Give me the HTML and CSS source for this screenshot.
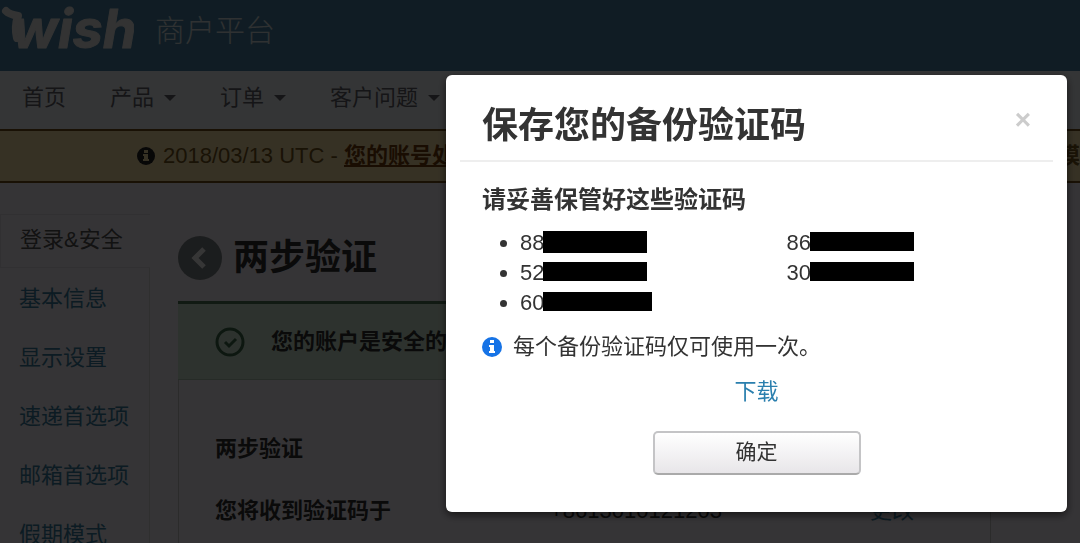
FILE: index.html
```html
<!DOCTYPE html>
<html lang="zh-CN">
<head>
    <meta charset="UTF-8">
    <meta name="viewport" content="width=device-width, initial-scale=1.0">
    <title>Wish 商户平台</title>
    <link rel="stylesheet" href="styles.css">
</head>
<body>

    <header class="topbar">
        <a class="logo" href="#">
            <svg width="134" height="54" viewBox="0 0 134 54" aria-hidden="true">
                <path class="swash" d="M6 11 C9 14 13 15 18 16 C16 22 15 30 17 38"/>
                <text x="12" y="48">wish</text>
            </svg>
        </a>
        <span class="platform">商户平台</span>
    </header>

    <nav class="menu">
        <a href="#">首页</a>
        <a class="dropdown" href="#">产品</a>
        <a class="dropdown" href="#">订单</a>
        <a class="dropdown" href="#">客户问题</a>
    </nav>

    <div class="notice">
        <svg class="notice-icon" width="18" height="18" viewBox="0 0 18 18" aria-hidden="true">
            <circle cx="9" cy="9" r="9"/>
            <path d="M7 3h4v3H7zM6 7h5v5h1v2H6v-2h1V9H6z"/>
        </svg>
        <span>2018/03/13 UTC - <a href="#">您的账号处于</a></span>
        <span class="notice-end">模</span>
    </div>

    <div class="page">
        <aside class="sidebar">
            <a class="active" href="#">登录&amp;安全</a>
            <a href="#">基本信息</a>
            <a href="#">显示设置</a>
            <a href="#">速递首选项</a>
            <a href="#">邮箱首选项</a>
            <a href="#">假期模式</a>
        </aside>

        <main class="content">
            <div class="heading">
                <a class="back" href="#" aria-label="返回">
                    <svg width="44" height="44" viewBox="0 0 44 44" aria-hidden="true">
                        <circle cx="22" cy="22" r="22"/>
                        <path d="M26 13L17 22l9 9"/>
                    </svg>
                </a>
                <h1>两步验证</h1>
            </div>
            <div class="safe">
                <svg width="30" height="30" viewBox="0 0 30 30" aria-hidden="true">
                    <circle cx="15" cy="15" r="13"/>
                    <path d="M10 15l4 4 7-7"/>
                </svg>
                <strong>您的账户是安全的</strong>
            </div>
            <div class="panel">
                <div class="row"><strong>两步验证</strong></div>
                <div class="row">
                    <strong>您将收到验证码于</strong>
                    <span>+8613010121203</span>
                    <a href="#">更改</a>
                </div>
            </div>
        </main>
    </div>

    <div class="backdrop">
        <div class="modal" role="dialog" aria-modal="true" aria-labelledby="modalTitle">
            <div class="modal-header">
                <h2 id="modalTitle">保存您的备份验证码</h2>
                <button class="close" type="button" aria-label="关闭">×</button>
            </div>
            <div class="modal-body">
                <h3>请妥善保管好这些验证码</h3>
                <div class="codes">
                    <ul>
                        <li>88<span class="mask tall"></span></li>
                        <li>52<span class="mask"></span></li>
                        <li>60<span class="mask wide"></span></li>
                    </ul>
                    <ul class="plain">
                        <li>86<span class="mask"></span></li>
                        <li>30<span class="mask"></span></li>
                    </ul>
                </div>
                <p class="hint">
                    <svg width="20" height="20" viewBox="0 0 20 20" aria-hidden="true">
                        <circle cx="10" cy="10" r="10"/>
                        <path d="M8 3h4v3H8zM7 8h5v6h1v2H7v-2h1v-4H7z"/>
                    </svg>
                    每个备份验证码仅可使用一次。
                </p>
                <a class="download" href="#">下载</a>
                <button class="ok" type="button">确定</button>
            </div>
        </div>
    </div>

</body>
</html>
```

FILE: styles.css
```css
* {
    box-sizing: border-box;
}
body {
    margin: 0;
    height: 100vh;
    overflow: hidden;
    font-family: "Liberation Sans", "Noto Sans CJK SC", sans-serif;
    font-size: 22px;
    line-height: 30px;
    color: #333;
    background-color: #faf4fc;
}
a {
    color: #3a82a3;
    text-decoration: none;
}
h1, h2, h3, p, ul {
    margin: 0;
}

/* top bar */
.topbar {
    display: flex;
    align-items: flex-start;
    gap: 21px;
    height: 71px;
    background: #4c85a8;
}
.logo svg {
    display: block;
}
.logo text {
    font: italic 700 54px Inter, sans-serif;
    fill: #eee;
    stroke: #eee;
    stroke-width: 1;
    stroke-linejoin: round;
}
.swash {
    fill: none;
    stroke: #eee;
    stroke-width: 8;
    stroke-linecap: round;
    stroke-linejoin: round;
}
.platform {
    padding-top: 13px;
    font-family: "Noto Sans CJK SC", sans-serif;
    font-size: 30px;
    font-weight: 300;
    color: #dde6ea;
}

/* menu */
.menu {
    display: flex;
    gap: 44px;
    height: 58px;
    padding: 12px 22px;
    background: #f6faff;
}
.menu a {
    display: flex;
    align-items: center;
    gap: 10px;
    height: 30px;
    color: #66666c;
}
.dropdown::after {
    content: "";
    border: 6px solid transparent;
    border-top-color: #66666c;
    border-bottom: 0;
}

.notice {
    display: flex;
    align-items: center;
    gap: 8px;
    height: 54px;
    padding-left: 137px;
    white-space: nowrap;
    color: #79591c;
    background: #ffe6ac;
    border-top: 2px solid #755018;
    border-bottom: 2px solid #755018;
}
.notice a {
    font-weight: bold;
    color: #79410a;
    text-decoration: underline;
}
.notice-end {
    margin-left: auto;
    font-weight: bold;
}
.notice-icon {
    fill: #222;
}
.notice-icon path {
    fill: #ffe6ac;
}

/* page */
.page {
    display: flex;
    gap: 28px;
    padding-top: 31px;
}
.sidebar {
    width: 150px;
}
.sidebar a {
    display: block;
    height: 59px;
    padding: 16px 19px;
    border-right: 1px solid #ddd;
}
.sidebar .active {
    height: 54px;
    padding-top: 10px;
    color: #555;
    border: 1px solid #e8e0ec;
    border-right: 0;
}
.content {
    width: 813px;
}
.heading {
    display: flex;
    align-items: center;
    gap: 11px;
    padding-top: 22px;
    height: 66px;
}
.heading h1 {
    font-size: 36px;
}
.back svg {
    display: block;
    fill: #82898c;
}
.back path {
    fill: none;
    stroke: #fff;
    stroke-width: 5;
}
.safe {
    display: flex;
    align-items: center;
    gap: 26px;
    height: 79px;
    margin-top: 21px;
    padding-left: 37px;
    color: #333;
    background: #d6ecda;
    border-top: 3px solid #527a5a;
    border-bottom: 1px solid #b5cbb9;
}
.safe svg {
    fill: none;
    stroke: #3d6d4c;
    stroke-width: 3;
}
.panel {
    padding: 38px 36px;
    height: 300px;
    border: 1px solid #ccc;
    border-top: 0;
}
.row {
    display: grid;
    grid-template-columns: 335px 320px auto;
    height: 62px;
    padding-top: 16px;
}

/* dialog */
.backdrop {
    position: fixed;
    inset: 0;
    display: flex;
    align-items: flex-start;
    justify-content: flex-end;
    padding: 75px 13px;
    background: rgba(0, 0, 0, 0.79);
}
.modal {
    width: 100%;
    max-width: 621px;
    background: #fff;
    border-radius: 6px;
    box-shadow: 0 3px 9px rgba(0, 0, 0, 0.6);
}
.modal-header {
    display: flex;
    align-items: flex-end;
    justify-content: space-between;
    height: 87px;
    margin: 0 14px;
    padding: 0 22px 19px;
    border-bottom: 2px solid #eee;
}
.modal-header h2 {
    font-size: 36px;
}
.close {
    padding: 0 0 5px;
    border: 0;
    background: none;
    font: bold 28px "Liberation Sans", sans-serif;
    color: #ccc;
    cursor: pointer;
}
.modal-body {
    display: flex;
    flex-direction: column;
    padding: 23px 36px 37px;
}
.modal-body h3 {
    font-size: 24px;
}
.codes {
    display: grid;
    grid-template-columns: 1fr 1fr;
    gap: 30px;
    margin-top: 13px;
}
.codes ul {
    padding-left: 38px;
}
.codes .plain {
    padding-left: 15px;
    list-style: none;
}
.codes li {
    height: 30px;
}
.mask {
    display: inline-block;
    width: 104px;
    height: 19px;
    margin: -5px 0 0 -1px;
    vertical-align: middle;
    background: #000;
}
.tall {
    height: 22px;
}
.wide {
    width: 109px;
}
.hint {
    display: flex;
    align-items: center;
    gap: 11px;
    margin-top: 14px;
}
.hint svg {
    fill: #1673e6;
}
.hint path {
    fill: #fff;
}
.download {
    align-self: center;
    margin-top: 15px;
    color: #2a7fae;
}
.ok {
    align-self: center;
    width: 208px;
    height: 44px;
    margin-top: 24px;
    padding: 0 0 6px;
    font: 21px "Noto Sans CJK SC", sans-serif;
    line-height: 30px;
    color: #333;
    background: linear-gradient(#fff, #e8e6e9);
    border: 2px solid #c4c4c6;
    border-bottom-color: #aaa;
    border-radius: 5px;
    cursor: pointer;
}
```
